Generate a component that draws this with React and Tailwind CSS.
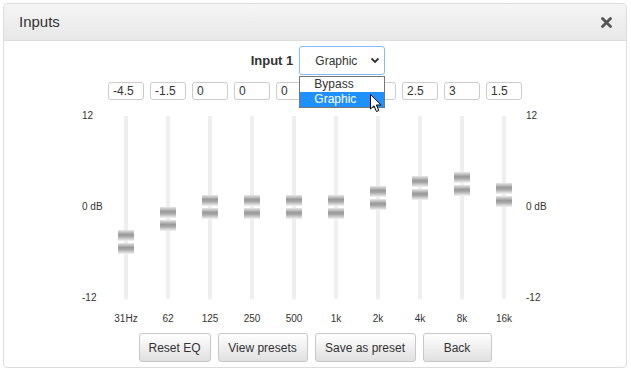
import React from "react";

const bands = [
  { f: "31Hz", v: -4.5 },
  { f: "62", v: -1.5 },
  { f: "125", v: 0 },
  { f: "250", v: 0 },
  { f: "500", v: 0 },
  { f: "1k", v: 0 },
  { f: "2k", v: 1.2 },
  { f: "4k", v: 2.5 },
  { f: "8k", v: 3 },
  { f: "16k", v: 1.5 },
];

const shown = ["-4.5", "-1.5", "0", "0", "0", "0", "1", "2.5", "3", "1.5"];

function Thumb({ v }) {
  const top = Math.round(79 - v * 7.8);
  return (
    <div className="absolute left-1/2 -translate-x-1/2 w-[16px] flex flex-col gap-[2px]" style={{ top }}>
      <div className="h-[11px] bg-[linear-gradient(to_bottom,#e8e8e8,#9a9a9a_40%,#a8a8a8_60%,#f4f4f4)]" />
      <div className="h-[11px] bg-[linear-gradient(to_bottom,#e8e8e8,#9a9a9a_40%,#a8a8a8_60%,#f4f4f4)]" />
    </div>
  );
}

export default function App() {
  return (
    <div className="p-[3px] bg-white font-['Liberation_Sans',Arial,sans-serif] text-[#333]">
      <div className="w-[624px] h-[365px] border border-[#dddddd] rounded-[4px] flex flex-col overflow-visible">
        <div className="h-[37px] flex items-center justify-between pl-[15px] pr-[14px] border-b border-[#dddddd] rounded-t-[4px] bg-[linear-gradient(to_bottom,#f5f5f5,#e8e8e8)]">
          <span className="text-[15px] text-[#333]">Inputs</span>
          <svg width="11" height="11" viewBox="0 0 11 11">
            <path d="M1.5 1.5 L9.5 9.5 M9.5 1.5 L1.5 9.5" stroke="#555" strokeWidth="2.8" strokeLinecap="round" />
          </svg>
        </div>

        <div className="flex flex-col pt-[5px]">
          <div className="flex justify-center items-center pl-[6px] gap-[6px]">
            <span className="text-[13px] font-bold text-[#333]">Input 1</span>
            <div className="relative">
              <div className="w-[86px] h-[29px] border border-[#80bdff] rounded-[3px] bg-white flex items-center pl-[15px] pr-[4px] justify-between">
                <span className="text-[12px] text-[#333]">Graphic</span>
                <svg width="10" height="7" viewBox="0 0 10 7">
                  <path d="M1.5 1.5 L5 5 L8.5 1.5" stroke="#333" strokeWidth="1.8" fill="none" />
                </svg>
              </div>
              <div className="absolute left-0 top-[30px] w-[86px] z-10 border border-[#767676] bg-white text-[12px] leading-[13px]">
                <div className="pl-[14px] text-[#333] py-[1px]">Bypass</div>
                <div className="pl-[14px] text-white bg-[#1e90ff] py-[1px]">Graphic</div>
              </div>
              <svg width="13" height="19" viewBox="0 0 13 19" className="absolute left-[71px] top-[48px] z-20">
                <path d="M0.5 0.5 L0.5 15 L4 11.8 L6.5 17.5 L8.8 16.5 L6.4 11 L11 11 Z" fill="white" stroke="black" strokeWidth="1" strokeLinejoin="round" />
              </svg>
            </div>
          </div>

          <div className="flex justify-center mt-[7px]">
            <div className="flex">
              <div className="w-[23px]" />
              {shown.map((s, i) => (
                <div key={i} className="w-[42px] flex justify-center">
                  <div className="w-[36px] h-[18px] border border-[#cccccc] rounded-[3px] bg-white text-[12px] leading-[16px] pl-[4px] text-[#333]">
                    {s}
                  </div>
                </div>
              ))}
              <div className="w-[23px]" />
            </div>
          </div>

          <div className="flex justify-center mt-[10px]">
            <div className="flex h-[194px]">
              <div className="w-[23px] flex flex-col justify-between text-[10px] leading-[12px]">
                <span>12</span>
                <span>0 dB</span>
                <span>-12</span>
              </div>
              {bands.map((b, i) => (
                <div key={i} className="w-[42px] flex justify-center pt-[6px]">
                  <div className="relative w-[4px] h-[183px] bg-[#efefef]">
                    <Thumb v={b.v} />
                  </div>
                </div>
              ))}
              <div className="w-[23px] flex flex-col justify-between text-[10px] leading-[12px] pl-[1px]">
                <span>12</span>
                <span>0 dB</span>
                <span>-12</span>
              </div>
            </div>
          </div>

          <div className="flex justify-center mt-[9px]">
            <div className="flex">
              <div className="w-[23px]" />
              {bands.map((b, i) => (
                <div key={i} className="w-[42px] text-center text-[10px] leading-[12px] text-[#333]">
                  {b.f}
                </div>
              ))}
              <div className="w-[23px]" />
            </div>
          </div>

          <div className="flex justify-center gap-[7px] mt-[8px]">
            {[
              ["Reset EQ", "w-[72px]"],
              ["View presets", "w-[90px]"],
              ["Save as preset", "w-[101px]"],
              ["Back", "w-[69px]"],
            ].map(([t, w]) => (
              <div
                key={t}
                className={`${w} h-[29px] flex items-center justify-center text-[12px] text-[#333] border border-[#c8c8c8] rounded-[3px] bg-[linear-gradient(to_bottom,#ffffff,#e0e0e0)]`}
              >
                {t}
              </div>
            ))}
          </div>
        </div>
      </div>
    </div>
  );
}
